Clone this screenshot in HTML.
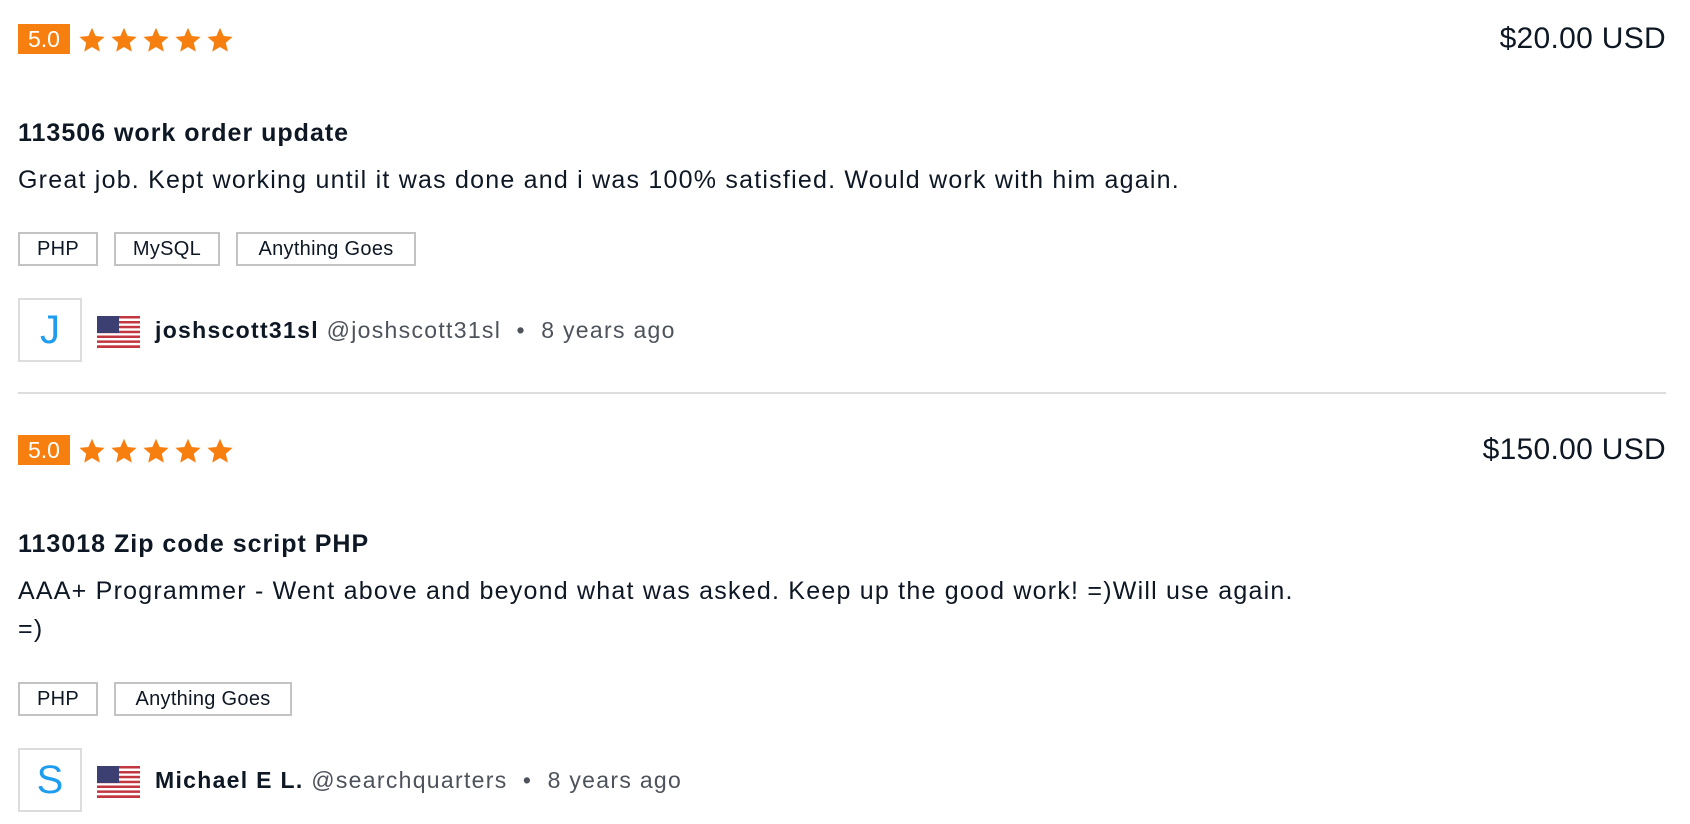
<!DOCTYPE html>
<html><head><meta charset="utf-8"><style>
*{margin:0;padding:0;box-sizing:border-box}
body{width:1690px;height:824px;background:#fff;font-family:"Liberation Sans",Arial,sans-serif;color:#0e1724;position:relative;overflow:hidden}
.a{position:absolute;white-space:nowrap;line-height:1}
.badge{position:absolute;left:18px;width:52px;height:30px;background:#f77f0f;color:#fff;font-size:23px;line-height:30px;text-align:center}
.stars{position:absolute;left:78px}
.price{font-size:30px;right:24px;letter-spacing:0.3px}
.title{font-size:25px;font-weight:bold;left:18px;letter-spacing:1px}
.body{font-size:25px;left:18px;line-height:38px;letter-spacing:1.22px}
.tag{position:absolute;height:34px;border:2px solid #c3c3c3;font-size:20px;line-height:30px;text-align:center;color:#0e1724;letter-spacing:0.3px}
.av{position:absolute;left:18px;width:64px;height:64px;border:2px solid #ddd;color:#1e9df0;font-size:40px;line-height:60px;text-align:center}
.flag{position:absolute;left:97px}
.meta{left:155px;font-size:23px;letter-spacing:1.3px}
.meta b{color:#0e1724}
.meta span{color:#4d525b}
.sep{position:absolute;left:18px;width:1648px;top:392px;height:2px;background:#ddd}
</style></head><body>

<svg width="0" height="0" style="position:absolute"><defs>
<symbol id="st" viewBox="0 0 24 24"><path d="M12 1.5l3.1 7.1 7.7.7-5.8 5.1 1.7 7.6L12 18l-6.7 4 1.7-7.6-5.8-5.1 7.7-.7z" fill="#f77f0f"/></symbol>
<symbol id="fl" viewBox="0 0 43 32">
<rect width="43" height="32" fill="#fff"/>
<g fill="#c2363f"><rect y="0" width="43" height="2.5"/><rect y="5" width="43" height="2.5"/><rect y="9.8" width="43" height="2.5"/><rect y="14.7" width="43" height="2.5"/><rect y="19.5" width="43" height="2.5"/><rect y="24.4" width="43" height="2.5"/><rect y="29.3" width="43" height="2.7"/></g>
<rect width="22" height="17" fill="#3b3f72"/>
</symbol></defs></svg>

<!-- Review 1 -->
<div class="badge" style="top:24px">5.0</div>
<svg class="stars" style="top:26px" width="156" height="28"><use href="#st" x="0" y="0" width="28" height="28"/><use href="#st" x="32" y="0" width="28" height="28"/><use href="#st" x="64" y="0" width="28" height="28"/><use href="#st" x="96" y="0" width="28" height="28"/><use href="#st" x="128" y="0" width="28" height="28"/></svg>
<div class="a price" style="top:24px">$20.00 USD</div>
<div class="a title" style="top:121px">113506 work order update</div>
<div class="a body" style="top:161px">Great job. Kept working until it was done and i was 100% satisfied. Would work with him again.</div>
<div class="tag" style="left:18px;top:232px;width:80px">PHP</div>
<div class="tag" style="left:114px;top:232px;width:106px">MySQL</div>
<div class="tag" style="left:236px;top:232px;width:180px">Anything Goes</div>
<div class="av" style="top:298px">J</div>
<svg class="flag" style="top:316px" width="43" height="32"><use href="#fl"/></svg>
<div class="a meta" style="top:319px"><b>joshscott31sl</b> <span>@joshscott31sl &nbsp;•&nbsp; 8 years ago</span></div>

<div class="sep"></div>

<!-- Review 2 -->
<div class="badge" style="top:435px">5.0</div>
<svg class="stars" style="top:437px" width="156" height="28"><use href="#st" x="0" y="0" width="28" height="28"/><use href="#st" x="32" y="0" width="28" height="28"/><use href="#st" x="64" y="0" width="28" height="28"/><use href="#st" x="96" y="0" width="28" height="28"/><use href="#st" x="128" y="0" width="28" height="28"/></svg>
<div class="a price" style="top:435px">$150.00 USD</div>
<div class="a title" style="top:532px">113018 Zip code script PHP</div>
<div class="a body" style="top:572px">AAA+ Programmer - Went above and beyond what was asked. Keep up the good work! =)Will use again.<br>=)</div>
<div class="tag" style="left:18px;top:682px;width:80px">PHP</div>
<div class="tag" style="left:114px;top:682px;width:178px">Anything Goes</div>
<div class="av" style="top:748px">S</div>
<svg class="flag" style="top:766px" width="43" height="32"><use href="#fl"/></svg>
<div class="a meta" style="top:769px"><b>Michael E L.</b> <span>@searchquarters &nbsp;•&nbsp; 8 years ago</span></div>

</body></html>
